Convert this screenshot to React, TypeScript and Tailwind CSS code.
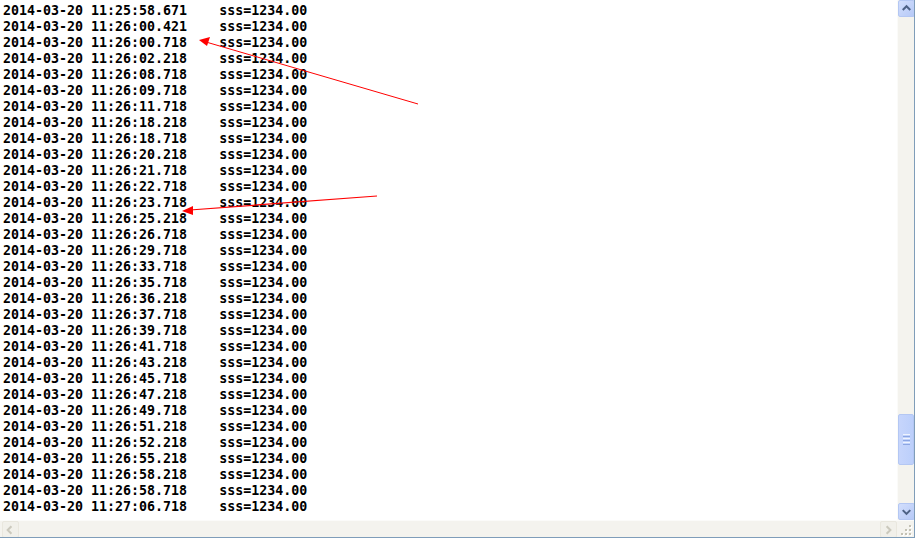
import React from 'react';

const times = [
  '11:25:58.671', '11:26:00.421', '11:26:00.718', '11:26:02.218', '11:26:08.718', '11:26:09.718',
  '11:26:11.718', '11:26:18.218', '11:26:18.718', '11:26:20.218', '11:26:21.718', '11:26:22.718',
  '11:26:23.718', '11:26:25.218', '11:26:26.718', '11:26:29.718', '11:26:33.718', '11:26:35.718',
  '11:26:36.218', '11:26:37.718', '11:26:39.718', '11:26:41.718', '11:26:43.218', '11:26:45.718',
  '11:26:47.218', '11:26:49.718', '11:26:51.218', '11:26:52.218', '11:26:55.218', '11:26:58.218',
  '11:26:58.718', '11:27:06.718',
];

function ArrowBtn({ dir, disabled = false }: { dir: 'up' | 'down' | 'left' | 'right'; disabled?: boolean }) {
  const pts = {
    up: '4,9 8,5 12,9',
    down: '4,6 8,10 12,6',
    left: '9,4 5,8 9,12',
    right: '6,4 10,8 6,12',
  }[dir];
  return (
    <div
      className={
        disabled
          ? 'w-[17px] h-[17px] rounded-[2px] border border-[#e9e7de] bg-[#f1f0ea] flex items-center justify-center'
          : 'w-[17px] h-[17px] rounded-[2px] border border-[#b4c7f3] bg-gradient-to-br from-[#d2defc] to-[#b6c9f7] flex items-center justify-center'
      }
    >
      <svg width="16" height="16" viewBox="0 0 16 16">
        <polyline points={pts} fill="none" stroke={disabled ? '#cbc9bd' : '#4d6185'} strokeWidth="2.2" />
      </svg>
    </div>
  );
}

export default function App() {
  return (
    <div className="w-[915px] h-[538px] bg-white flex flex-col border-r border-b border-[#7f9db9] overflow-hidden relative">
      <div className="flex flex-1 min-h-0">
        {/* Text area */}
        <div
          className="flex-1 pl-[3px] pt-[3px] text-[13.3px] font-bold leading-[16px] text-black whitespace-pre"
          style={{ fontFamily: "'DejaVu Sans Mono', 'Liberation Mono', monospace" }}
        >
          {times.map((t, i) => (
            <div key={i} className="h-4">{`2014-03-20 ${t}    sss=1234.00`}</div>
          ))}
        </div>

        {/* Vertical scrollbar */}
        <div className="w-[17px] flex flex-col bg-[#f4f3ee] border-l border-[#fbfbf9]">
          <ArrowBtn dir="up" />
          <div className="flex-1 flex flex-col">
            <div className="h-[397px]" />
            <div className="h-[51px] rounded-[2px] border border-[#b4c7f3] bg-gradient-to-r from-[#c6d5fc] to-[#bccffb] flex flex-col items-center justify-center gap-[1px]">
              <div className="w-[7px] h-[1px] bg-[#eef3fe]" />
              <div className="w-[7px] h-[1px] bg-[#8ca6e3]" />
              <div className="w-[7px] h-[1px] bg-[#eef3fe]" />
              <div className="w-[7px] h-[1px] bg-[#8ca6e3]" />
              <div className="w-[7px] h-[1px] bg-[#eef3fe]" />
              <div className="w-[7px] h-[1px] bg-[#8ca6e3]" />
            </div>
          </div>
          <ArrowBtn dir="down" />
        </div>
      </div>

      {/* Horizontal scrollbar */}
      <div className="h-[17px] flex bg-[#f4f3ee] border-t border-[#fbfbf9]">
        <div className="pl-[2px]">
          <ArrowBtn dir="left" disabled />
        </div>
        <div className="flex-1" />
        <ArrowBtn dir="right" disabled />
        <div className="w-[17px] h-[17px] relative">
          <svg width="17" height="17" viewBox="0 0 17 17" className="absolute inset-0">
            {[
              [12, 4], [12, 8], [8, 8], [12, 12], [8, 12], [4, 12],
            ].map(([x, y], i) => (
              <g key={i}>
                <rect x={x + 1} y={y + 1} width="2" height="2" fill="#ffffff" />
                <rect x={x} y={y} width="2" height="2" fill="#c3c1b4" />
              </g>
            ))}
          </svg>
        </div>
      </div>

      {/* Red annotation arrows */}
      <svg className="absolute left-0 top-0 pointer-events-none" width="915" height="538">
        <line x1="418" y1="104" x2="206" y2="42" stroke="#ff0000" strokeWidth="1" />
        <polygon points="199,40 210,37 207,46" fill="#ff0000" />
        <line x1="377" y1="196" x2="190" y2="210" stroke="#ff0000" strokeWidth="1.2" />
        <polygon points="182,211 193,206 193,215" fill="#ff0000" />
      </svg>
    </div>
  );
}
